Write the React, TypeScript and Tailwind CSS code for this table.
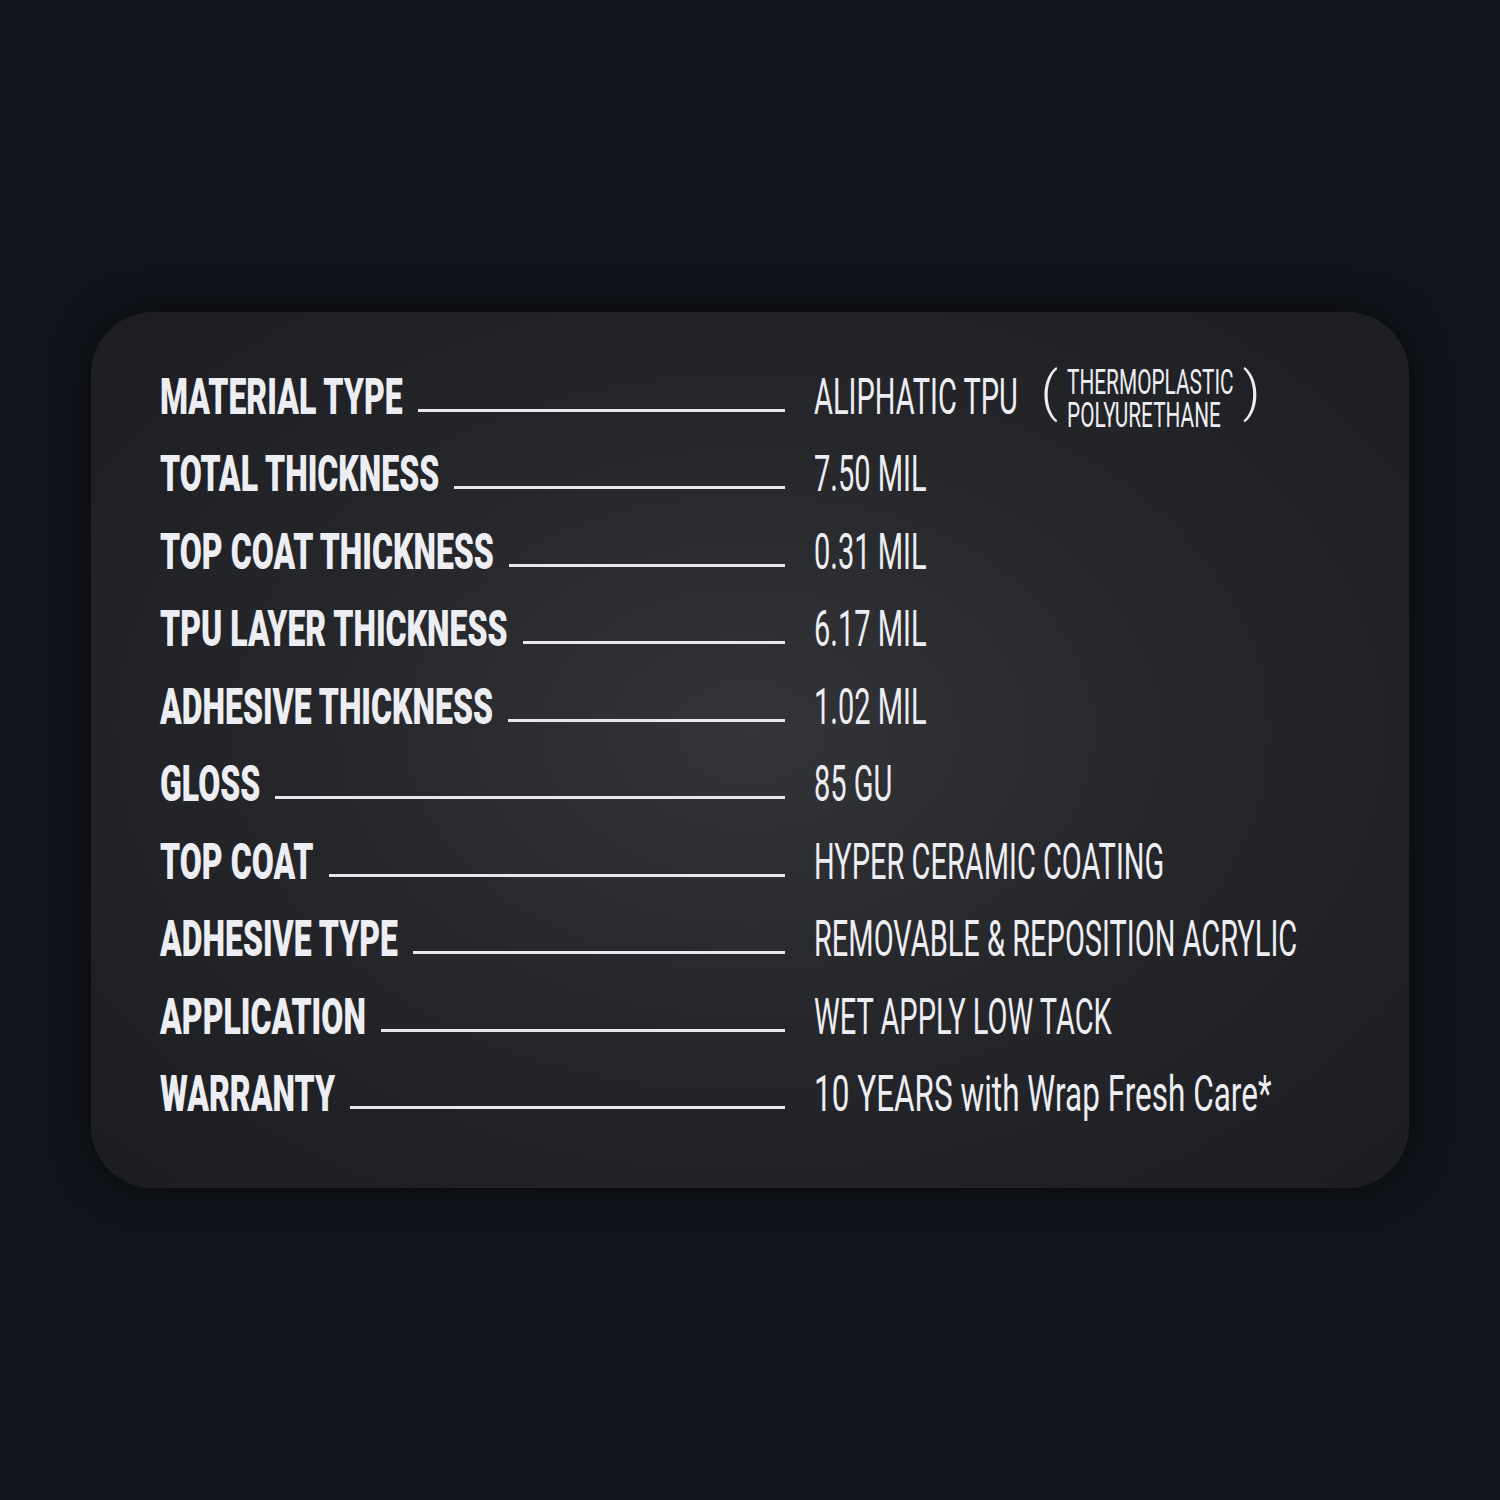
import { useLayoutEffect, useRef, useState, type ReactNode } from "react";

const specs = [
  { label: "MATERIAL TYPE", value: "ALIPHATIC TPU", note: ["THERMOPLASTIC", "POLYURETHANE"] },
  { label: "TOTAL THICKNESS", value: "7.50 MIL" },
  { label: "TOP COAT THICKNESS", value: "0.31 MIL" },
  { label: "TPU LAYER THICKNESS", value: "6.17 MIL" },
  { label: "ADHESIVE THICKNESS", value: "1.02 MIL" },
  { label: "GLOSS", value: "85 GU" },
  { label: "TOP COAT", value: "HYPER CERAMIC COATING" },
  { label: "ADHESIVE TYPE", value: "REMOVABLE & REPOSITION ACRYLIC" },
  { label: "APPLICATION", value: "WET APPLY LOW TACK" },
  { label: "WARRANTY", value: "10 YEARS with Wrap Fresh Care*", wide: true },
];

// condensed look: squeeze the text horizontally, keep the box as wide as what is seen
function Squeeze({ children, className }: { children: ReactNode; className: string }) {
  const ref = useRef<HTMLSpanElement>(null);
  const [w, setW] = useState<number>();
  useLayoutEffect(() => {
    if (ref.current) setW(ref.current.getBoundingClientRect().width);
  }, []);
  return (
    <span className="inline-block shrink-0" style={{ width: w }}>
      <span ref={ref} className={"inline-block origin-left whitespace-nowrap " + className}>
        {children}
      </span>
    </span>
  );
}

export default function App() {
  return (
    <div className="w-[1500px] h-[1500px] overflow-hidden bg-[#11141b] flex items-center justify-center font-['Roboto',sans-serif] text-[#eceef3]">
      <div className="w-[1318px] h-[876px] overflow-hidden rounded-[62px] bg-[radial-gradient(ellipse_at_50%_48%,#343539_0%,#26272b_45%,#1b1d22_100%)] shadow-[0_0_40px_rgba(0,0,0,0.6)] pl-[69px] pr-[40px] pt-[32px] flex flex-col">
        {specs.map((s) => (
          <div key={s.label} className="h-[77.56px] shrink-0 flex items-end">
            <div className="w-[625px] shrink-0 flex items-end gap-[15px]">
              <Squeeze className="text-[50px] leading-none font-black scale-x-[0.64]">{s.label}</Squeeze>
              <div className="flex-1 h-[3px] bg-[#e6e8ee] mb-[10px]" />
            </div>
            <div className="ml-[29px] flex items-end">
              <Squeeze
                className={
                  s.wide
                    ? "text-[50px] leading-none font-normal scale-x-[0.63]"
                    : "text-[50px] leading-none font-normal scale-x-[0.58]"
                }
              >
                {s.value}
              </Squeeze>
              {s.note && (
                <div className="ml-[23px] flex items-center gap-[9px] mb-[-11px]">
                  <span className="text-[54px] leading-none font-light mb-[14px]">(</span>
                  <div className="flex flex-col text-[35px] leading-[33px]">
                    <Squeeze className="scale-x-[0.595]">{s.note[0]}</Squeeze>
                    <Squeeze className="scale-x-[0.595]">{s.note[1]}</Squeeze>
                  </div>
                  <span className="text-[54px] leading-none font-light mb-[14px]">)</span>
                </div>
              )}
            </div>
          </div>
        ))}
      </div>
    </div>
  );
}
